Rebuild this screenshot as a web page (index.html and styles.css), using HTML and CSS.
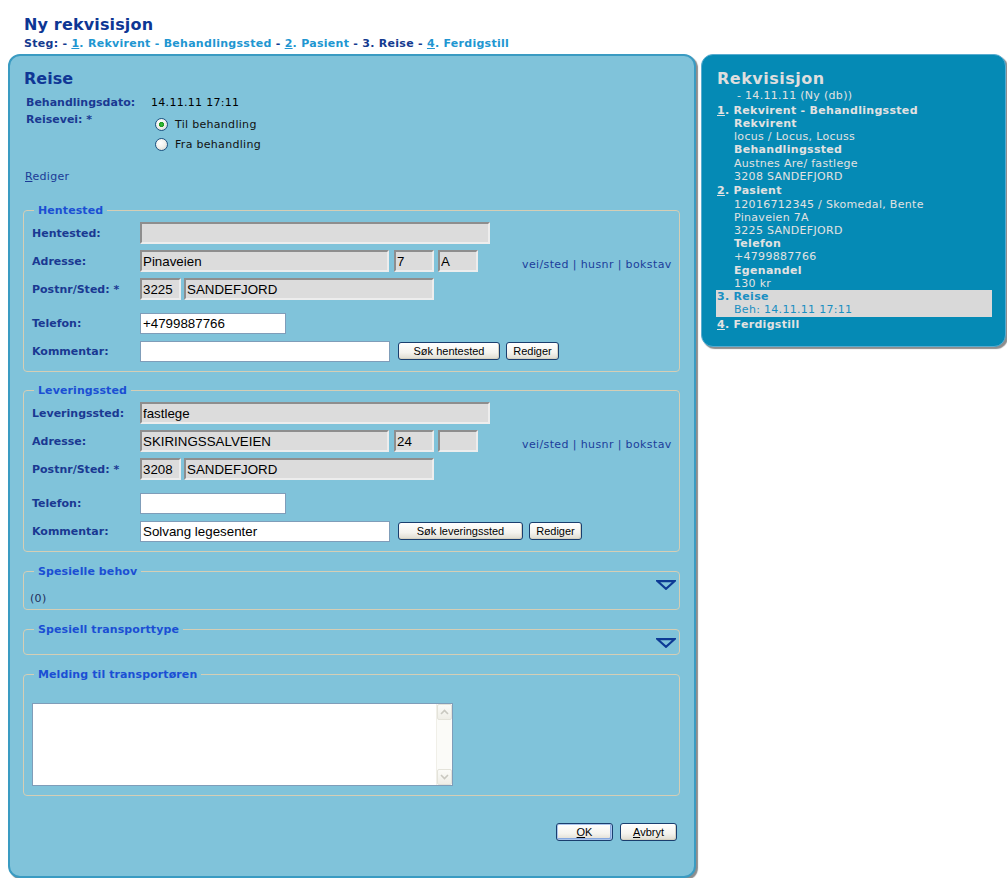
FILE: index.html
```html
<!DOCTYPE html>
<html lang="no">
<head>
<meta charset="utf-8">
<title>Ny rekvisisjon</title>
<link rel="stylesheet" href="styles.css">
</head>
<body>
<header class="page-head">
  <h1 class="page-title">Ny rekvisisjon</h1>
  <div class="steps">Steg: - <a class="step-link"><u>1</u>. Rekvirent - Behandlingssted</a> - <a class="step-link"><u>2</u>. Pasient</a> - 3. Reise - <a class="step-link"><u>4</u>. Ferdigstill</a></div>
</header>

<div class="layout">
  <main class="panel">
    <h2 class="panel-title">Reise</h2>
    <div class="info">
      <div class="info-label">Behandlingsdato:</div>
      <div class="info-value">14.11.11 17:11</div>
      <div class="info-label">Reisevei: *</div>
      <div class="radios">
        <label class="radio-row"><input type="radio" name="vei" class="radio" checked>Til behandling</label>
        <label class="radio-row"><input type="radio" name="vei" class="radio">Fra behandling</label>
      </div>
    </div>
    <a class="edit-link"><u>R</u>ediger</a>

    <fieldset class="group">
      <legend class="group-legend">Hentested</legend>
      <div class="row">
        <span class="row-label">Hentested:</span>
        <input class="field field-ro w-350" type="text" value="" readonly>
      </div>
      <div class="row">
        <span class="row-label">Adresse:</span>
        <input class="field field-ro w-249" type="text" value="Pinaveien" readonly>
        <input class="field field-ro w-40 gap-5" type="text" value="7" readonly>
        <input class="field field-ro w-40 gap-4" type="text" value="A" readonly>
        <span class="addr-help">vei/sted | husnr | bokstav</span>
      </div>
      <div class="row">
        <span class="row-label">Postnr/Sted: *</span>
        <input class="field field-ro w-41" type="text" value="3225" readonly>
        <input class="field field-ro w-250 gap-3" type="text" value="SANDEFJORD" readonly>
      </div>
      <div class="row row-spaced">
        <span class="row-label">Telefon:</span>
        <input class="field field-edit w-146" type="text" value="+4799887766">
      </div>
      <div class="row">
        <span class="row-label">Kommentar:</span>
        <input class="field field-edit w-250" type="text" value="">
        <button class="btn btn-search gap-8" type="button">Søk hentested</button>
        <button class="btn btn-small gap-6" type="button">Rediger</button>
      </div>
    </fieldset>

    <fieldset class="group group-next">
      <legend class="group-legend">Leveringssted</legend>
      <div class="row">
        <span class="row-label">Leveringssted:</span>
        <input class="field field-ro w-350" type="text" value="fastlege" readonly>
      </div>
      <div class="row">
        <span class="row-label">Adresse:</span>
        <input class="field field-ro w-249" type="text" value="SKIRINGSSALVEIEN" readonly>
        <input class="field field-ro w-40 gap-5" type="text" value="24" readonly>
        <input class="field field-ro w-40 gap-4" type="text" value="" readonly>
        <span class="addr-help">vei/sted | husnr | bokstav</span>
      </div>
      <div class="row">
        <span class="row-label">Postnr/Sted: *</span>
        <input class="field field-ro w-41" type="text" value="3208" readonly>
        <input class="field field-ro w-250 gap-3" type="text" value="SANDEFJORD" readonly>
      </div>
      <div class="row row-spaced">
        <span class="row-label">Telefon:</span>
        <input class="field field-edit w-146" type="text" value="">
      </div>
      <div class="row">
        <span class="row-label">Kommentar:</span>
        <input class="field field-edit w-250" type="text" value="Solvang legesenter">
        <button class="btn btn-search-wide gap-8" type="button">Søk leveringssted</button>
        <button class="btn btn-small gap-6" type="button">Rediger</button>
      </div>
    </fieldset>

    <fieldset class="group group-next group-collapsible">
      <legend class="group-legend">Spesielle behov</legend>
      <div class="toggle-row">
        <svg class="toggle-icon" width="20" height="10" viewBox="0 0 20 10"><path d="M1.5 1.2 H18.5 L10 8.8 Z" fill="none" stroke="#0d3a95" stroke-width="2.2" stroke-linejoin="miter"/></svg>
      </div>
      <div class="count">(0)</div>
    </fieldset>

    <fieldset class="group group-next group-collapsible group-empty">
      <legend class="group-legend">Spesiell transporttype</legend>
      <div class="toggle-row">
        <svg class="toggle-icon" width="20" height="10" viewBox="0 0 20 10"><path d="M1.5 1.2 H18.5 L10 8.8 Z" fill="none" stroke="#0d3a95" stroke-width="2.2" stroke-linejoin="miter"/></svg>
      </div>
    </fieldset>

    <fieldset class="group group-next group-message">
      <legend class="group-legend">Melding til transportøren</legend>
      <div class="textarea-box">
        <textarea class="message" aria-label="Melding til transportøren"></textarea>
        <div class="scrollbar">
          <span class="sb-btn"><svg width="9" height="6" viewBox="0 0 9 6"><path d="M1 5 L4.5 1.5 L8 5" fill="none" stroke="#c9c8c0" stroke-width="1.6"/></svg></span>
          <span class="sb-track"></span>
          <span class="sb-btn"><svg width="9" height="6" viewBox="0 0 9 6"><path d="M1 1 L4.5 4.5 L8 1" fill="none" stroke="#c9c8c0" stroke-width="1.6"/></svg></span>
        </div>
      </div>
    </fieldset>

    <div class="actions">
      <button class="btn btn-action btn-default" type="button"><u>O</u>K</button>
      <button class="btn btn-action" type="button"><u>A</u>vbryt</button>
    </div>
  </main>

  <aside class="summary">
    <h2 class="summary-title">Rekvisisjon</h2>
    <div class="summary-date">- 14.11.11 (Ny (db))</div>
    <div class="step"><u>1</u>. Rekvirent - Behandlingssted</div>
    <div class="sub sub-head">Rekvirent</div>
    <div class="sub">locus / Locus, Locuss</div>
    <div class="sub sub-head">Behandlingssted</div>
    <div class="sub">Austnes Are/ fastlege</div>
    <div class="sub">3208 SANDEFJORD</div>
    <div class="step"><u>2</u>. Pasient</div>
    <div class="sub">12016712345 / Skomedal, Bente</div>
    <div class="sub">Pinaveien 7A</div>
    <div class="sub">3225 SANDEFJORD</div>
    <div class="sub sub-head">Telefon</div>
    <div class="sub">+4799887766</div>
    <div class="sub sub-head">Egenandel</div>
    <div class="sub">130 kr</div>
    <div class="current">
      <div class="step step-current">3. Reise</div>
      <div class="sub">Beh: 14.11.11 17:11</div>
    </div>
    <div class="step step-last"><u>4</u>. Ferdigstill</div>
  </aside>
</div>
</body>
</html>
```

FILE: styles.css
```css
html, body {
  margin: 0;
  padding: 0;
  background: #ffffff;
}

body {
  font-family: "DejaVu Sans", Verdana, sans-serif;
  font-size: 11px;
  line-height: 13px;
  letter-spacing: 0.3px;
  color: #000;
  padding-top: 15px;
}

.page-head {
  padding-left: 24px;
}

.page-title {
  margin: 0;
  font-size: 16px;
  line-height: 20px;
  font-weight: bold;
  letter-spacing: 0.15px;
  color: #0d3694;
}

.steps {
  margin-top: 2px;
  font-weight: bold;
  color: #143a8f;
  line-height: 13px;
  letter-spacing: 0.28px;
}

.step-link {
  color: #2196d1;
  text-decoration: none;
}

.layout {
  display: flex;
  align-items: flex-start;
  gap: 5px;
  margin: 4px 0 0 8px;
}

/* ---------- left panel ---------- */
.panel {
  box-sizing: border-box;
  width: 688px;
  flex: none;
  background: #80c3da;
  border: 2px solid #3a9bc2;
  border-radius: 12px;
  box-shadow: 2px 2px 1px #8d8d8d;
  padding: 13px 0 35px 0;
}

.panel-title {
  margin: 0 0 0 14px;
  font-size: 16px;
  line-height: 20px;
  letter-spacing: 0;
  color: #0f3795;
}

.info {
  display: grid;
  grid-template-columns: 125px auto;
  row-gap: 4px;
  margin: 7px 0 0 16px;
}

.info-label {
  font-weight: bold;
  color: #1a3992;
  line-height: 13px;
  letter-spacing: 0;
}

.info-value {
  color: #000;
}

.radios {
  padding-top: 1px;
  display: flex;
  flex-direction: column;
}

.radio-row {
  height: 20px;
  display: flex;
  align-items: center;
  color: #111;
}

.radio {
  appearance: none;
  -webkit-appearance: none;
  box-sizing: border-box;
  width: 13px;
  height: 13px;
  margin: 0 7px 0 4px;
  border: 1px solid #1c5180;
  border-radius: 50%;
  background: radial-gradient(circle at 40% 35%, #ffffff 0%, #f2f2ee 45%, #d0d0c8 100%);
}

.radio:checked {
  background:
    radial-gradient(circle at 50% 50%, #3cc23c 0, #1f9a1f 2.4px, transparent 2.9px),
    radial-gradient(circle at 40% 35%, #ffffff 0%, #f2f2ee 45%, #d0d0c8 100%);
}

.edit-link {
  display: block;
  width: max-content;
  margin: 16px 0 0 15px;
  color: #1b3b96;
  text-decoration: none;
}

/* ---------- fieldsets ---------- */
.group {
  margin: 21px 14px 0 13px;
  padding: 2px 8px 6px 8px;
  border: 1px solid #d5ceb5;
  border-radius: 4px;
  min-inline-size: 0;
}

.group-next {
  margin-top: 12px;
}

.group-collapsible {
  margin-top: 13px;
  padding-bottom: 4px;
}

.group-empty {
  padding-bottom: 6px;
}

.group-message {
  margin-top: 13px;
  padding-bottom: 9px;
}

.group-legend {
  margin-left: 2px;
  padding: 0 4px;
  font-weight: bold;
  color: #1b4fd4;
  line-height: 13px;
  letter-spacing: 0.1px;
}

.row {
  display: flex;
  align-items: center;
  height: 28px;
}

.row-spaced {
  margin-top: 6px;
}

.row-label {
  width: 108px;
  flex: none;
  font-weight: bold;
  letter-spacing: 0;
  color: #1a3992;
}

.field {
  box-sizing: border-box;
  flex: none;
  margin: 0;
  font-family: "Liberation Sans", Arial, sans-serif;
  font-size: 13.33px;
  letter-spacing: 0;
  color: #000;
  padding: 0 2px;
  outline: none;
}

.field-ro {
  height: 22px;
  background: #dcdcdc;
  border-style: solid;
  border-width: 2px;
  border-color: #8e8e8e #ededed #ededed #8e8e8e;
  padding: 0 1px;
}

.field-edit {
  height: 21px;
  background: #ffffff;
  border: 1px solid #7f9db9;
}

.w-350 { width: 350px; }
.w-249 { width: 249px; }
.w-250 { width: 250px; }
.w-146 { width: 146px; }
.w-41 { width: 41px; }
.w-40 { width: 40px; }

.gap-3 { margin-left: 3px; }
.gap-4 { margin-left: 4px; }
.gap-5 { margin-left: 5px; }
.gap-6 { margin-left: 6px; }
.gap-8 { margin-left: 8px; }

.addr-help {
  margin: 6px 0 0 44px;
  color: #1c3d9b;
  white-space: nowrap;
  letter-spacing: 0.38px;
}

.btn {
  box-sizing: border-box;
  flex: none;
  height: 18px;
  padding: 0;
  font-family: "Liberation Sans", Arial, sans-serif;
  font-size: 11px;
  line-height: 16px;
  letter-spacing: 0;
  color: #000;
  border: 1px solid #1a3e6e;
  border-radius: 3px;
  background: linear-gradient(#ffffff 0%, #f4f3ee 60%, #dedbd0 100%);
  box-shadow: inset -1px -1px 0 #d6d2c2;
}

.btn-search { width: 102px; }
.btn-search-wide { width: 125px; }
.btn-small { width: 53px; }

.toggle-row {
  display: flex;
  justify-content: flex-end;
  height: 10px;
  margin-right: -5px;
}

.toggle-icon {
  display: block;
}

.count {
  margin: 2px 0 0 -2px;
  color: #1f2d5c;
}

.textarea-box {
  box-sizing: border-box;
  display: flex;
  width: 421px;
  height: 83px;
  margin-top: 20px;
  border: 1px solid #7f9db9;
  background: #ffffff;
}

.message {
  flex: 1;
  border: 0;
  margin: 0;
  padding: 2px;
  resize: none;
  outline: none;
  background: transparent;
  font-family: "Liberation Sans", Arial, sans-serif;
  font-size: 13.33px;
}

.scrollbar {
  width: 15px;
  flex: none;
  display: flex;
  flex-direction: column;
  background: #fbfbf8;
  border-left: 1px solid #f0efe8;
}

.sb-btn {
  box-sizing: border-box;
  height: 16px;
  display: flex;
  align-items: center;
  justify-content: center;
  border: 1px solid #e4e3da;
  border-radius: 2px;
  background: linear-gradient(#fbfbf8, #efeee7);
}

.sb-track {
  flex: 1;
}

.actions {
  display: flex;
  justify-content: flex-end;
  gap: 7px;
  margin: 27px 17px 0 0;
}

.btn-action {
  width: 57px;
}

.btn-default {
  box-shadow: inset 0 0 0 1px #a9c4ec, inset -1px -1px 0 1px #86a8df;
}

/* ---------- right summary ---------- */
.summary {
  box-sizing: border-box;
  width: 305px;
  flex: none;
  background: #058ab5;
  border: 1px solid #58acd0;
  border-radius: 12px;
  box-shadow: 2px 2px 1px #8d8d8d;
  padding: 14px 13px 14px 14px;
  color: #e2e2e2;
  line-height: 13.2px;
}

.summary-title {
  margin: 0 0 0 1px;
  font-size: 16px;
  line-height: 20px;
  letter-spacing: 0.5px;
  color: #dedede;
}

.summary-date {
  padding-left: 21px;
}

.step {
  margin-top: 1.5px;
  font-weight: bold;
  padding-left: 1px;
}

.sub {
  padding-left: 18px;
}

.sub-head {
  font-weight: bold;
}

.current {
  margin-top: 0;
  background: #d9d9d9;
  color: #1a8fc2;
  padding-bottom: 0.5px;
}

.step-current {
  margin-top: 0;
}

.step-last {
  margin-top: 1.5px;
}
```
